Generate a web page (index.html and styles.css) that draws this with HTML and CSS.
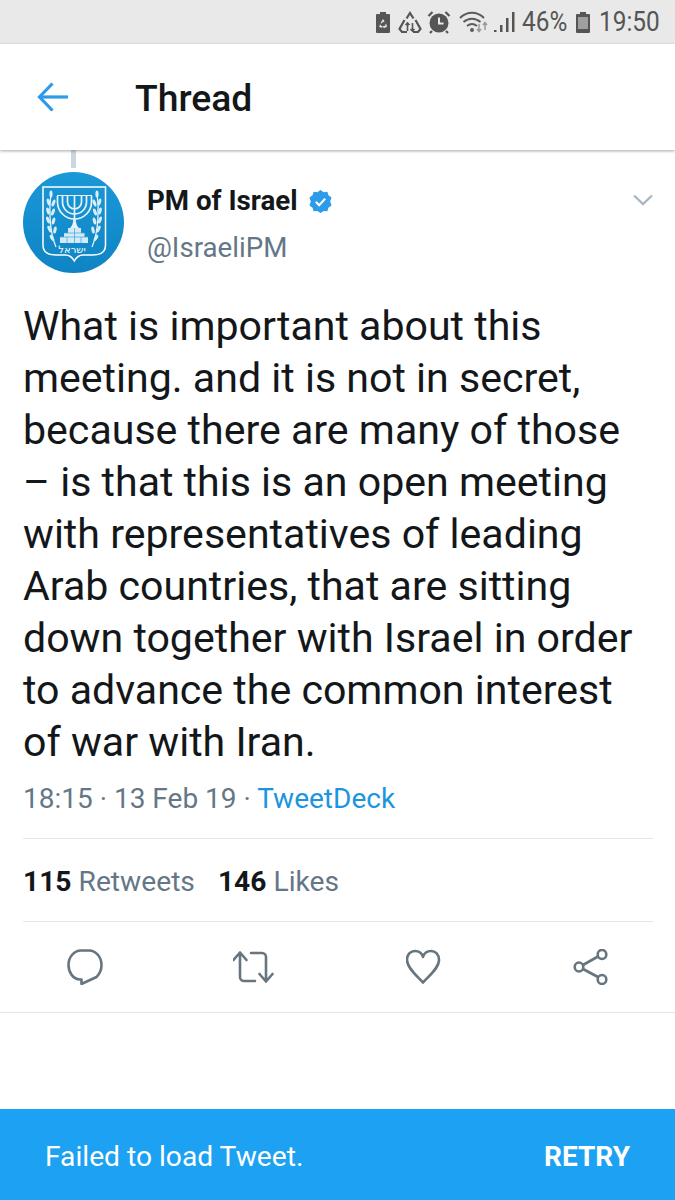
FILE: index.html
```html
<!DOCTYPE html>
<html lang="en">
<head>
<meta charset="utf-8">
<title>Thread</title>
<link rel="stylesheet" href="styles.css">
</head>
<body>
<div class="statusbar">
  <svg class="st-bat" width="16" height="23" viewBox="0 0 16 23"><path d="M5 1h6v2h3a1 1 0 0 1 1 1v17a1 1 0 0 1-1 1H2a1 1 0 0 1-1-1V4a1 1 0 0 1 1-1h3z" fill="#555"/><path d="M8 8l1.600 2.600-1.200.7-.4-.7-1 1.700H5.500zM5 13.500l1.300.7-.5.900h1.700v1.400H5.300c-.8 0-1.200-.8-.8-1.500zM11 12.500l.8 2.300c.3.800-.2 1.700-1 1.700H9.300v1l-1.500-1.700 1.500-1.600v.9h1.300l-.5-1.400z" fill="#e9e9e9"/></svg>
  <svg class="st-rec" width="24" height="23" viewBox="0 0 24 23" fill="none" stroke="#555" stroke-width="2.200"><path d="M8.500 7.500L12 2l3.500 5.500M17.500 9l5 9-2.500 3h-5M9 21H4l-2.500-3 5-9"/><path d="M9.500 12v8M7.500 14l2-2 2 2M14.500 12v8M12.500 18l2 2 2-2" stroke-width="1.600"/></svg>
  <svg class="st-alarm" width="24" height="24" viewBox="0 0 24 24"><circle cx="12" cy="13" r="9.500" fill="#555"/><path d="M12 7.500V13.500h4.500" fill="none" stroke="#e9e9e9" stroke-width="2"/><path d="M1.500 6l4-4M22.500 6l-4-4M5 21l-2 2M19 21l2 2" stroke="#555" stroke-width="2.200"/></svg>
  <svg class="st-wifi" width="30" height="24" viewBox="0 0 30 24" fill="none"><path d="M1 8c7-7 17-7 24 0M4.500 12c5-4.500 12-4.500 17 0M8 16c3-2.500 7-2.500 10 0" stroke="#5c5c5c" stroke-width="2"/><circle cx="13" cy="20" r="2" fill="#5c5c5c"/><path d="M20 14v7M18 19l2 2.500 2-2.500M26 20v-7M24 15l2-2.500 2 2.500" stroke="#999" stroke-width="1.500"/></svg>
  <svg class="st-signal" width="22" height="24" viewBox="0 0 22 24" fill="#555"><rect x="1" y="20" width="2.500" height="2"/><rect x="7" y="15" width="2.500" height="7"/><rect x="13" y="8" width="2.500" height="14"/><rect x="19" y="2" width="2.500" height="20"/></svg>
  <span class="st-text st-pct">46%</span>
  <svg class="st-batt" width="16" height="23" viewBox="0 0 16 23"><path d="M5 1h6v2h3a1 1 0 0 1 1 1v17a1 1 0 0 1-1 1H2a1 1 0 0 1-1-1V4a1 1 0 0 1 1-1h3z" fill="#555"/><rect x="3" y="6" width="10" height="12" fill="#a0a0a0"/></svg>
  <span class="st-text st-time">19:50</span>
</div>

<header class="topbar">
  <svg class="back" width="32" height="30" viewBox="0 0 32 30" fill="none" stroke="#2b9bea" stroke-width="3.200"><path d="M31 15H3"/><path d="M15.500 1.500L2.500 15l13 13.500"/></svg>
  <h1 class="title">Thread</h1>
</header>

<main class="tweet">
  <div class="connector"></div>
  <div class="author">
    <svg class="avatar" width="101" height="101" viewBox="0 0 101 101">
      <defs><linearGradient id="av" x1="0" y1="0" x2="0" y2="1"><stop offset="0" stop-color="#1a98d8"/><stop offset="1" stop-color="#0f84c4"/></linearGradient></defs>
      <circle cx="50.500" cy="50.500" r="50.500" fill="url(#av)"/>
      <path d="M20 15h62.500v58c0 8-6 10-13 10H60c-4 0-6.500 2-8.700 6-2.200-4-4.800-6-8.800-6H33c-7 0-13-2-13-10z" fill="none" stroke="#fff" stroke-width="1.500"/>
      <g fill="none" stroke="#e6f3fb" stroke-width="1.700">
        <path d="M34.500 24v6a17 17 0 0 0 34 0v-6M39.500 24v6a12 12 0 0 0 24 0v-6M44.500 24v6a7 7 0 0 0 14 0v-6M51.500 24v26"/>
        <path d="M34 23.500h35" stroke-width="1.200"/>
      </g>
      <path d="M47 56c2.500-2 3-5 3.300-9h2.400c.3 4 .8 7 3.300 9z" fill="#e6f3fb"/>
      <path d="M45 56h13v5h3.500v4H65v6H37v-6h4v-4H45z" fill="#d5eaf6"/>
      <path d="M37 65h28M41 61h20M51.500 56v15M44 65v6M58 65v6" stroke="#3aa3dc" stroke-width=".7"/>
      <g fill="none" stroke="#e6f3fb" stroke-width="1.300">
        <path d="M28 21c-2 14-2 38 5 54"/>
        <path d="M74 21c2 14 2 38-5 54"/>
      </g>
      <g fill="#d8edf8">
        <ellipse cx="28" cy="22" rx="1.600" ry="3.600"/><ellipse cx="25.500" cy="30" rx="1.600" ry="3.600" transform="rotate(-15 25.500 30)"/><ellipse cx="30.500" cy="31" rx="1.600" ry="3.600" transform="rotate(20 30.500 31)"/><ellipse cx="25" cy="39" rx="1.600" ry="3.600" transform="rotate(-15 25 39)"/><ellipse cx="30" cy="40" rx="1.600" ry="3.600" transform="rotate(20 30 40)"/><ellipse cx="25" cy="48" rx="1.600" ry="3.600" transform="rotate(-20 25 48)"/><ellipse cx="30.500" cy="49" rx="1.600" ry="3.600" transform="rotate(15 30.500 49)"/><ellipse cx="26.500" cy="57" rx="1.600" ry="3.600" transform="rotate(-25 26.500 57)"/><ellipse cx="32" cy="58" rx="1.600" ry="3.600" transform="rotate(10 32 58)"/><ellipse cx="29" cy="66" rx="1.600" ry="3.600" transform="rotate(-30 29 66)"/>
        <ellipse cx="74" cy="22" rx="1.600" ry="3.600"/><ellipse cx="76.500" cy="30" rx="1.600" ry="3.600" transform="rotate(15 76.500 30)"/><ellipse cx="71.500" cy="31" rx="1.600" ry="3.600" transform="rotate(-20 71.500 31)"/><ellipse cx="77" cy="39" rx="1.600" ry="3.600" transform="rotate(15 77 39)"/><ellipse cx="72" cy="40" rx="1.600" ry="3.600" transform="rotate(-20 72 40)"/><ellipse cx="77" cy="48" rx="1.600" ry="3.600" transform="rotate(20 77 48)"/><ellipse cx="71.500" cy="49" rx="1.600" ry="3.600" transform="rotate(-15 71.500 49)"/><ellipse cx="75.500" cy="57" rx="1.600" ry="3.600" transform="rotate(25 75.500 57)"/><ellipse cx="70" cy="58" rx="1.600" ry="3.600" transform="rotate(-10 70 58)"/><ellipse cx="73" cy="66" rx="1.600" ry="3.600" transform="rotate(30 73 66)"/>
      </g>
      <text class="emblem-text" x="49" y="81" text-anchor="middle">ישראל</text>
    </svg>
    <div class="names">
      <div class="name-row">
        <span class="name">PM of Israel</span>
        <svg class="badge" width="25" height="25" viewBox="0 0 24 24"><path d="M12 1l3 2 3.600-.3 1 3.400 3 2.100L21.300 12l1.300 3.800-3 2.100-1 3.400-3.600-.3-3 2-3-2-3.600.3-1-3.400-3-2.100L2.700 12 1.400 8.200l3-2.100 1-3.400L9 3z" fill="#2b9bea"/><path d="M7.500 12.300l3.200 3.200 5.800-6.300" fill="none" stroke="#fff" stroke-width="2"/></svg>
      </div>
      <div class="handle">@IsraeliPM</div>
    </div>
    <svg class="chevron" width="22" height="14" viewBox="0 0 22 14" fill="none" stroke="#a9b7c3" stroke-width="2.400"><path d="M2 2.500l9 8.500 9-8.500"/></svg>
  </div>

  <p class="body-text">What is important about this<br>meeting. and it is not in secret,<br>because there are many of those<br>– is that this is an open meeting<br>with representatives of leading<br>Arab countries, that are sitting<br>down together with Israel in order<br>to advance the common interest<br>of war with Iran.</p>

  <div class="meta">18:15 · 13 Feb 19 · <span class="link">TweetDeck</span></div>

  <div class="stats">
    <span class="stat"><b>115</b> Retweets</span>
    <span class="stat"><b>146</b> Likes</span>
  </div>

  <div class="actions">
    <svg width="36" height="36" viewBox="0 0 36 36" fill="none" stroke="#66757f" stroke-width="2.600" stroke-linejoin="round"><path d="M14.500 30.500H13C6 30.500 1.500 23 1.500 16 1.500 8 7 1.500 14 1.500h8C29 1.500 34.500 8 34.500 16c0 5-2 9-5 12l-15 7z"/></svg>
    <svg width="42" height="36" viewBox="1 0 42 36" fill="none" stroke="#66757f" stroke-width="2.600" stroke-linejoin="round" stroke-linecap="round"><path d="M1.500 11l6.500-7.500 6.500 7.500M8 4v24a4 4 0 0 0 4 4h11"/><path d="M40.500 25L34 32.500 27.500 25M34 32V8a4 4 0 0 0-4-4H19"/></svg>
    <svg width="36" height="36" viewBox="1 0 36 36" fill="none" stroke="#66757f" stroke-width="2.600" stroke-linejoin="round"><path d="M18 33.500C12 27 2 19 2 11 2 5.500 5.500 2 10 2c4 0 7 2.500 8 6 1-3.500 4-6 8-6 4.500 0 8 3.500 8 9 0 8-10 16-16 22.500z"/></svg>
    <svg width="36" height="36" viewBox="-1 0 36 36" fill="none" stroke="#66757f" stroke-width="2.600"><ellipse cx="6" cy="18" rx="4.300" ry="4.500"/><ellipse cx="29" cy="5.500" rx="4.300" ry="4.500"/><ellipse cx="29" cy="30.500" rx="4.300" ry="4.500"/><path d="M10 16l15-8.500M10 20l15 8"/></svg>
  </div>
</main>

<div class="snackbar">
  <span class="snack-msg">Failed to load Tweet.</span>
  <span class="snack-action">RETRY</span>
</div>
</body>
</html>
```

FILE: styles.css
```css
* { box-sizing: border-box; }
html, body { margin: 0; padding: 0; }
body {
  width: 675px;
  height: 1200px;
  background: #fff;
  font-family: Roboto, "Liberation Sans", sans-serif;
  color: #14171a;
  display: flex;
  flex-direction: column;
  overflow: hidden;
}
.statusbar {
  height: 44px;
  background: #e9e9e9;
  display: flex;
  align-items: center;
  justify-content: flex-end;
  padding: 0 15px 0 0;
  color: #555;
  flex: none;
}
.statusbar svg { flex: none; }
.st-rec { margin-left: 7px; }
.st-alarm { margin-left: 5px; }
.st-wifi { margin-left: 8px; }
.st-signal { margin-left: 4px; }
.st-batt { margin-left: 8px; }
.st-text {
  display: inline-block;
  font-size: 28px;
  line-height: 44px;
  color: #555;
  transform: scaleX(.87);
  transform-origin: left center;
}
.st-pct { margin-left: 7px; margin-right: -7px; }
.st-time { margin-left: 8px; margin-right: -9px; }

.topbar {
  height: 106px;
  flex: none;
  display: flex;
  align-items: center;
  padding: 0 0 0 37px;
  background: #fff;
  box-shadow: 0 1px 3px rgba(0,0,0,.35);
  position: relative;
  z-index: 1;
}
.back { flex: none; }
.title {
  margin: 2px 0 0 66px;
  font-size: 37.300px;
  line-height: 40px;
  font-weight: 500;
  color: #14171a;
}

.tweet { flex: 1; padding: 0 22px 0 23px; }
.connector { width: 5px; height: 18px; margin-left: 48px; background: #ccd6dd; }
.author { display: flex; margin-top: 4px; align-items: flex-start; }
.avatar { flex: none; }
.names { margin-left: 23px; flex: 1; padding-top: 12px; }
.name-row { display: flex; align-items: center; height: 34px; }
.name { font-size: 27.700px; font-weight: 700; line-height: 34px; color: #14171a; }
.badge { margin-left: 10px; flex: none; }
.handle { font-size: 27.700px; line-height: 34px; color: #657786; margin-top: 13px; }
.chevron { margin-top: 21px; flex: none; margin-right: -1px; }
.emblem-text { font-family: "DejaVu Sans", sans-serif; font-size: 10px; fill: #fff; }

.body-text {
  margin: 27px 0 0;
  font-size: 41.100px;
  line-height: 52px;
  color: #14171a;
}
.meta {
  margin-top: 13px;
  font-size: 28px;
  line-height: 36px;
  color: #657786;
}
.link { color: #1b95e0; }
.stats {
  margin-top: 21px;
  height: 84px;
  padding-top: 2px;
  border-top: 1px solid #e1e8ed;
  border-bottom: 1px solid #e1e8ed;
  display: flex;
  align-items: center;
  gap: 23px;
}
.stat { font-size: 28.200px; color: #657786; }
.stat b { font-weight: 700; color: #14171a; }
.actions {
  height: 91px;
  display: flex;
  align-items: center;
  justify-content: space-between;
  padding: 0 67px;
  margin: 0 -22px 0 -23px;
  border-bottom: 1px solid #e1e8ed;
}
.snackbar {
  height: 91px;
  flex: none;
  background: #1da1f2;
  color: #fff;
  display: flex;
  align-items: center;
  justify-content: space-between;
  padding: 3px 45px 0 45px;
}
.snack-msg { font-size: 28.200px; }
.snack-action { font-size: 28px; font-weight: 700; }
```
